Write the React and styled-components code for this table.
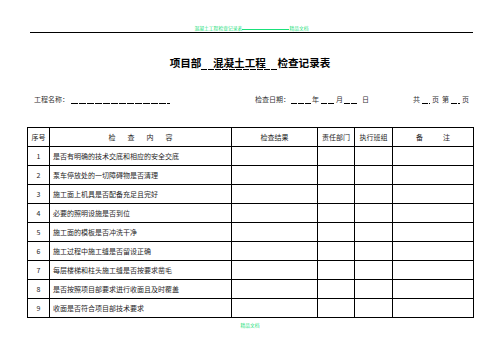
import React from "react"
import styled, { createGlobalStyle } from "styled-components"

const GlobalStyle = createGlobalStyle`
    html, body {
        margin: 0;
        padding: 0;
        background: #fff;
    }
    body {
        font-family: "Noto Sans CJK SC", "Noto Sans", sans-serif;
        color: #000;
    }
`

const items = [
    "是否有明确的技术交底和相应的安全交底",
    "泵车停放处的一切障碍物是否清理",
    "施工面上机具是否配备充足且完好",
    "必要的照明设施是否到位",
    "施工面的模板是否冲洗干净",
    "施工过程中施工缝是否留设正确",
    "每层楼梯和柱头施工缝是否按要求凿毛",
    "是否按照项目部要求进行收面且及时覆盖",
    "收面是否符合项目部技术要求",
]

const Page = styled.div`
    width: 503px;
    height: 356px;
    box-sizing: border-box;
    padding: 24px 30px 0 27px;
    display: flex;
    flex-direction: column;
`

const RunningHead = styled.div`
    margin-left: 3px;
    height: 8px;
    line-height: 8px;
    font-size: 4.8px;
    color: #19e07a;
    text-align: center;
    border-bottom: 1px solid #000;
    white-space: nowrap;
`

const HeadRule = styled.span`
    display: inline-block;
    width: 47px;
    height: 5px;
    vertical-align: baseline;
    border-bottom: 0.6px solid #19e07a;
`

const Title = styled.h1`
    margin: 23px 0 0;
    font-size: 10.6px;
    line-height: 14px;
    font-weight: bold;
    text-align: center;
    white-space: nowrap;
`

const Blank = styled.span`
    display: inline-block;
    width: ${p => p.$w}px;
    margin: 0 ${p => p.$gap || 0}px;
    text-align: center;
    background: repeating-linear-gradient(to right, #000 0 ${p => p.$dash || 6}px, transparent ${p => p.$dash || 6}px ${p => (p.$dash || 6) + 1}px) left bottom / 100% 1px no-repeat;
`

const Line = ({ children = "\u00a0", ...rest }) => <Blank {...rest}>{children}</Blank>

const InfoRow = styled.div`
    margin-top: 24px;
    padding-left: 7px;
    display: grid;
    grid-template-columns: 221px 158px auto;
    font-size: 7px;
    line-height: 10px;
    color: #333;
    white-space: nowrap;
`

const Field = styled.div`
    display: flex;
    align-items: flex-end;
`

const Spaced = styled.span`
    margin-left: ${p => p.$m}px;
`

const Table = styled.table`
    margin-top: 23px;
    width: 446px;
    border-collapse: collapse;
    table-layout: fixed;
    font-size: 7px;
    color: #262626;
`

const Cell = styled.td`
    height: 18px;
    padding: 0 ${p => (p.$left ? 3 : 0)}px;
    border: 1px solid #000;
    line-height: 18px;
    text-align: ${p => (p.$left ? "left" : "center")};
    white-space: nowrap;
    overflow: hidden;
`

const HeadCell = styled(Cell).attrs({ as: "th" })`
    font-weight: normal;
    letter-spacing: ${p => p.$spread || 0}px;
    text-indent: ${p => p.$spread || 0}px;
`

const Footer = styled.div`
    margin-top: 3px;
    font-size: 4.8px;
    line-height: 7px;
    color: #19e07a;
    text-align: center;
`

const App = () => {
    return (
        <Page>
            <GlobalStyle />
            <RunningHead>
                混凝土工程检查记录表<HeadRule />精品文档
            </RunningHead>
            <Title>
                项目部<Line $w={76} $dash={6}>混凝土工程</Line>检查记录表
            </Title>
            <InfoRow>
                <Field>
                    工程名称：<Line $w={99} $gap={2} $dash={7} />
                </Field>
                <Field>
                    检查日期：<Line $w={20} $gap={1} />年<Line $w={13} $gap={2} />月<Line $w={14} $gap={1} />
                    <Spaced $m={3}>日</Spaced>
                </Field>
                <Field>
                    共<Line $w={8} $gap={2} />页<Spaced $m={3}>第</Spaced><Line $w={9} $gap={2} />页
                </Field>
            </InfoRow>
            <Table>
                <colgroup>
                    <col style={{ width: 22 }} />
                    <col style={{ width: 182 }} />
                    <col style={{ width: 86 }} />
                    <col style={{ width: 37 }} />
                    <col style={{ width: 38 }} />
                    <col style={{ width: 81 }} />
                </colgroup>
                <thead>
                    <tr>
                        <HeadCell>序号</HeadCell>
                        <HeadCell $spread={12}>检查内容</HeadCell>
                        <HeadCell>检查结果</HeadCell>
                        <HeadCell>责任部门</HeadCell>
                        <HeadCell>执行班组</HeadCell>
                        <HeadCell $spread={20}>备注</HeadCell>
                    </tr>
                </thead>
                <tbody>
                    {items.map((text, i) => (
                        <tr key={i}>
                            <Cell>{i + 1}</Cell>
                            <Cell $left>{text}</Cell>
                            <Cell />
                            <Cell />
                            <Cell />
                            <Cell />
                        </tr>
                    ))}
                </tbody>
            </Table>
            <Footer>精品文档</Footer>
        </Page>
    )
}

export default App
